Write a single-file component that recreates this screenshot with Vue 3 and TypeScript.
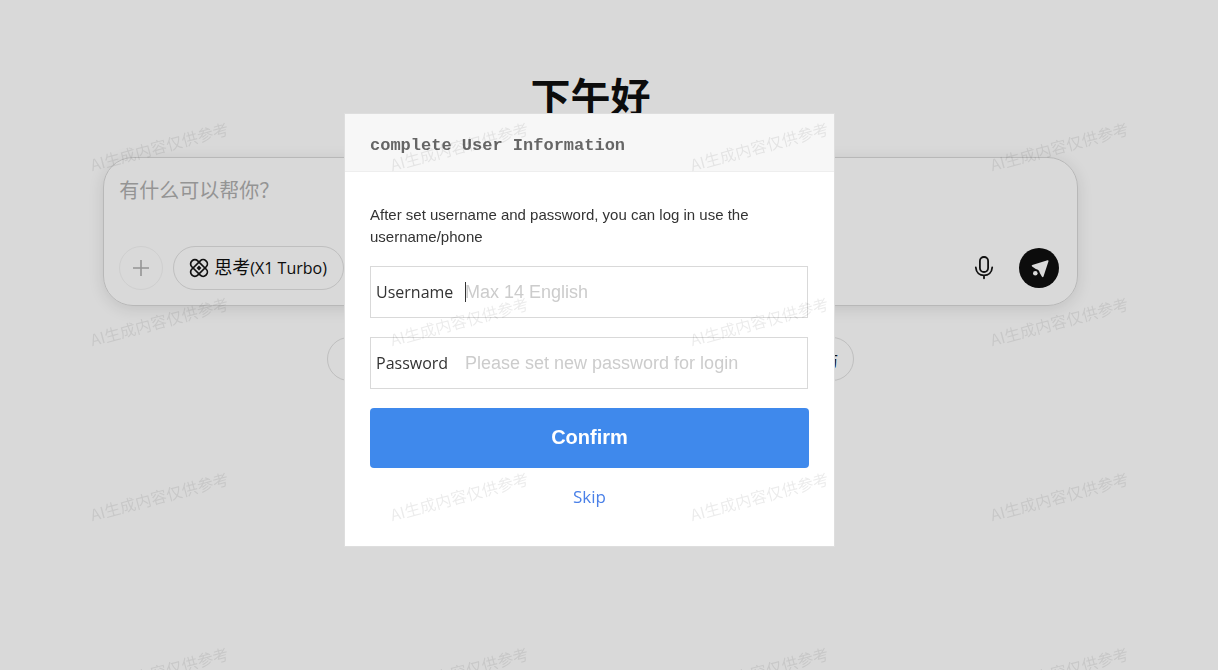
<script setup lang="ts">
import { ref } from 'vue'

const question = ref('')
const username = ref('')
const password = ref('')
const watermark = 'AI生成内容仅供参考'
</script>

<template>
  <div class="page">
    <main class="home">
      <h1 class="greeting">下午好</h1>
      <form class="composer" @submit.prevent>
        <textarea v-model="question" class="question" placeholder="有什么可以帮你？" aria-label="有什么可以帮你"></textarea>
        <div class="tools">
          <button type="button" class="add" aria-label="添加">
            <svg width="18" height="18" viewBox="0 0 18 18" fill="none" stroke="#949494" stroke-width="1.6">
              <path d="M9 1v16M1 9h16" />
            </svg>
          </button>
          <button type="button" class="think">
            <svg width="18" height="18" viewBox="0 0 18 18" fill="none" stroke="#111" stroke-width="1.7">
              <rect x="-1" y="4.800" width="20" height="8.400" rx="4" transform="rotate(45 9 9)" />
              <rect x="-1" y="4.800" width="20" height="8.400" rx="4" transform="rotate(-45 9 9)" />
              <path d="M9 6.600 11.400 9 9 11.400 6.600 9Z" fill="#111" stroke="none" />
            </svg>
            <span class="think-text">思考<span class="model">(X1 Turbo)</span></span>
          </button>
          <span class="spacer"></span>
          <button type="button" class="mic" aria-label="语音">
            <svg width="20" height="24" viewBox="0 0 20 24" fill="none" stroke="#111" stroke-width="1.8" stroke-linecap="round">
              <rect x="5.900" y="1" width="8.200" height="15" rx="4" />
              <path d="M1.800 11.500c.4 5 3.800 7.800 8.200 7.800s7.800-2.800 8.200-7.800M10 19.300v3" />
            </svg>
          </button>
          <button type="submit" class="send" aria-label="发送">
            <svg width="40" height="40" viewBox="0 0 40 40" fill="#d9d9d9">
              <path d="M28.500 12.300 13.300 16.900q-1.300.6-.2 1.500l3.700 2.600q3.400.5 4 4l2.200 3.800q.9 1 1.500-.2l5-15.300q.2-1.200-1-1Z" />
              <circle cx="16.300" cy="25.300" r="2.300" />
            </svg>
          </button>
        </div>
      </form>
      <nav class="topics">
        <button type="button" class="topic" aria-label="写作"></button>
        <button type="button" class="topic last">采访</button>
      </nav>
    </main>

    <div class="overlay">
      <section class="dialog" role="dialog" aria-labelledby="dialog-title">
        <header class="dialog-head">
          <h2 id="dialog-title">complete User Information</h2>
        </header>
        <form class="dialog-body" @submit.prevent>
          <p class="hint">After set username and password, you can log in use the username/phone</p>
          <div class="field">
            <label for="username">Username</label>
            <span class="caret"></span>
            <input id="username" v-model="username" type="text" placeholder="Max 14 English" />
          </div>
          <div class="field">
            <label for="password">Password</label>
            <input id="password" v-model="password" type="password" placeholder="Please set new password for login" />
          </div>
          <button type="submit" class="confirm">Confirm</button>
          <a href="#" class="skip">Skip</a>
        </form>
      </section>
    </div>

    <div class="watermarks" aria-hidden="true">
      <div v-for="n in 16" :key="n" class="mark"><span>{{ watermark }}</span></div>
    </div>
  </div>
</template>

<style>
html,
body {
  height: 100%;
  background: #d9d9d9;
}
</style>

<style scoped>
.page,
.page * {
  box-sizing: border-box;
}
.page {
  min-height: 100vh;
  font-family: "Open Sans", "Noto Sans CJK SC", sans-serif;
  color: #0c0c0c;
}
button,
input,
textarea {
  font: inherit;
  color: inherit;
  margin: 0;
  padding: 0;
  border: 0;
  background: none;
  outline: none;
}
svg {
  display: block;
  overflow: visible;
}
.home {
  display: flex;
  flex-direction: column;
  align-items: center;
  padding: 71px 37px 0 0;
}
.greeting {
  margin: 0 0 38px;
  font: bold 40px/48px "Noto Sans CJK SC", sans-serif;
}
.composer {
  width: 80vw;
  max-width: 975px;
  padding: 18px 18px 15px 15px;
  border: 1px solid #b8b8b8;
  border-radius: 30px;
  box-shadow: 0 3px 16px rgba(0, 0, 0, 0.11);
}
.question {
  display: block;
  width: 100%;
  height: 70px;
  resize: none;
  font: 20px/28px "Noto Sans CJK SC", sans-serif;
}
.question::placeholder {
  color: #949494;
  opacity: 1;
}
.tools {
  display: flex;
  align-items: center;
}
.add {
  display: grid;
  place-items: center;
  width: 44px;
  height: 44px;
  margin-right: 10px;
  border: 1px solid #cfcfcf;
  border-radius: 50%;
}
.think {
  display: flex;
  align-items: center;
  gap: 6px;
  height: 44px;
  padding: 0 16px;
  border: 1px solid #bfbfbf;
  border-radius: 22px;
}
.think-text {
  padding-bottom: 2px;
  font-size: 18px;
  line-height: 26px;
}
.model {
  font-size: 16px;
}
.spacer {
  flex: 1;
}
.mic {
  margin-right: 25px;
}
.send {
  border-radius: 50%;
  background: #0c0c0c;
}
.topics {
  display: flex;
  gap: 12px;
  width: 527px;
  max-width: 100%;
  margin-top: 31px;
}
.topic {
  flex: 1;
  height: 44px;
  padding: 0 15px;
  border: 1px solid #bfbfbf;
  border-radius: 22px;
  font-size: 16px;
}
.last {
  text-align: right;
}
.overlay {
  position: fixed;
  inset: 0;
  display: grid;
  place-items: center;
  padding: 0 39px 10px 0;
}
.dialog {
  width: 489px;
  max-width: 100%;
  background: #fff;
  box-shadow: 0 0 0 1px #dedede;
}
.dialog-head {
  padding: 19px 25px 13px;
  border-bottom: 1px solid #eee;
  background: #f7f7f7;
}
.dialog-head h2 {
  margin: 0;
  font: bold 17px/25px "Liberation Mono", monospace;
  color: #666;
}
.dialog-body {
  display: flex;
  flex-direction: column;
  padding: 32px 25px 37px;
}
.hint {
  margin: 0 0 18px;
  font: 15px/22px "Liberation Sans", Arial, sans-serif;
  color: #333;
}
.field {
  display: flex;
  align-items: center;
  height: 52px;
  margin: 0 1px 19px 0;
  padding: 0 5px;
  border: 1px solid #d9d9d9;
}
.field label {
  width: 89px;
  font-size: 16px;
  line-height: 24px;
  color: #333;
}
.field input {
  flex: 1;
  min-width: 0;
  height: 48px;
  font: 18px "Liberation Sans", Arial, sans-serif;
}
.field input::placeholder {
  color: #ccc;
  opacity: 1;
}
.caret {
  width: 1px;
  height: 20px;
  margin-right: -1px;
  background: #333;
}
.confirm {
  height: 60px;
  padding-bottom: 2px;
  border-radius: 4px;
  background: #3f89ec;
  color: #fff;
  font: bold 20px "Liberation Sans", Arial, sans-serif;
}
.skip {
  align-self: center;
  margin-top: 16px;
  font-size: 17px;
  line-height: 25px;
  color: #4a80e8;
  text-decoration: none;
}
.watermarks {
  position: fixed;
  inset: 0;
  display: grid;
  grid-template-columns: repeat(4, 300px);
  grid-auto-rows: 175px;
  padding: 58px 0 0 9px;
  overflow: hidden;
  pointer-events: none;
}
.mark {
  display: grid;
  place-items: center;
  font: 16px/24px "Noto Sans CJK SC", sans-serif;
  color: rgba(0, 0, 0, 0.08);
}
.mark span {
  transform: rotate(-15deg);
  white-space: nowrap;
}
</style>
